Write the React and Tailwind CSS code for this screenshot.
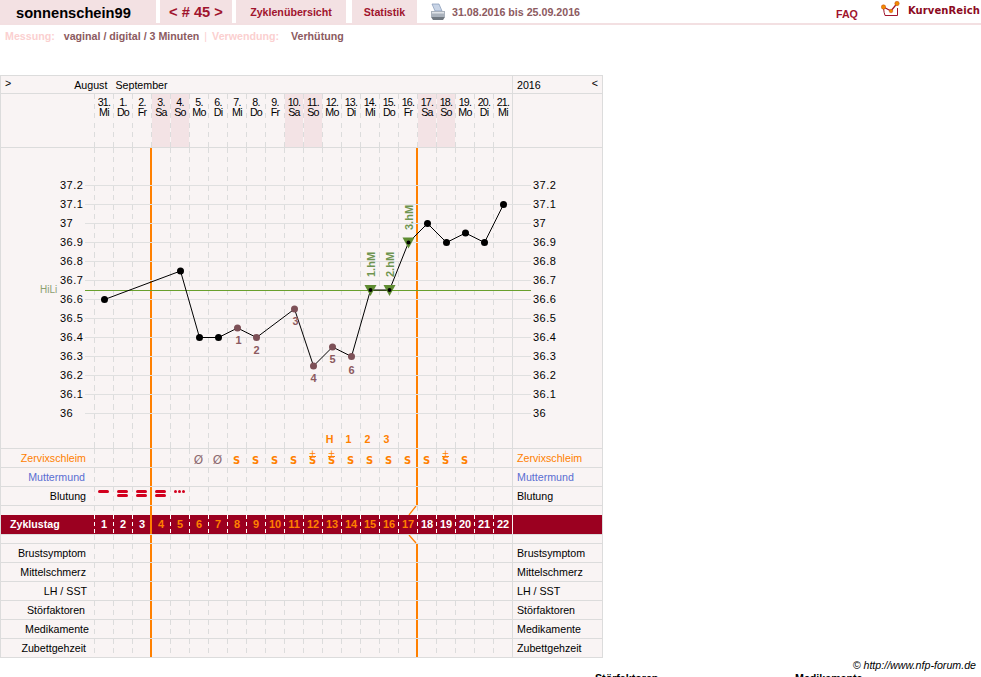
const days = [
  ["31.", "Mi"], ["1.", "Do"], ["2.", "Fr"], ["3.", "Sa"], ["4.", "So"], ["5.", "Mo"], ["6.", "Di"], ["7.", "Mi"],
  ["8.", "Do"], ["9.", "Fr"], ["10.", "Sa"], ["11.", "So"], ["12.", "Mo"], ["13.", "Di"], ["14.", "Mi"], ["15.", "Do"],
  ["16.", "Fr"], ["17.", "Sa"], ["18.", "So"], ["19.", "Mo"], ["20.", "Di"], ["21.", "Mi"],
];

const temps = ["37.2", "37.1", "37", "36.9", "36.8", "36.7", "36.6", "36.5", "36.4", "36.3", "36.2", "36.1", "36"];

// [day index, temperature, colour]
const points = [
  [0, 36.6, "b"], [4, 36.75, "b"], [5, 36.4, "b"], [6, 36.4, "b"], [7, 36.45, "r"], [8, 36.4, "r"], [10, 36.55, "r"],
  [11, 36.25, "r"], [12, 36.35, "r"], [13, 36.3, "r"], [14, 36.65, "s"], [15, 36.65, "s"], [16, 36.9, "s"],
  [17, 37, "b"], [18, 36.9, "b"], [19, 36.95, "b"], [20, 36.9, "b"], [21, 37.1, "b"],
];

const px = (i) => 19.5 + 19 * i;
const py = (t) => 265.5 - (t - 36) * 190;

const mucus = { 5: "Ø", 6: "Ø", 7: "S", 8: "S", 9: "S", 10: "S", 11: "S+", 12: "S+", 13: "S", 14: "S", 15: "S", 16: "S", 17: "S", 18: "S+", 19: "S" };
const peak = { 12: "H", 13: "1", 14: "2", 15: "3" };

const dash = "pl-[1px] bg-no-repeat bg-[length:1px_100%] bg-[repeating-linear-gradient(to_bottom,#dcdcdc_0,#dcdcdc_5px,transparent_5px,transparent_9.5px)]";
const dashWhite = "pl-[1px] bg-no-repeat bg-[length:1px_100%] bg-[repeating-linear-gradient(to_bottom,#ffffff_0,#ffffff_4px,transparent_4px,transparent_7px)]";

function DayCell({ index, noLine, children }) {
  const orange = index === 3 || (index === 17 && !noLine);
  return (
    <div className={`relative w-[19px] h-full shrink-0 ${dash}`}>
      {orange && <div className="absolute left-[-1px] top-0 bottom-0 w-[2px] bg-[#ff8000]" />}
      {children}
    </div>
  );
}

function Row({ label = "", labelClass = "text-black", pr = "pr-[8px]", height = "h-[19px]", border = "border-b", noLine, cell }) {
  return (
    <div className={`flex ${height} ${border} border-[#dcdcdc]`}>
      <div className={`w-[93px] shrink-0 text-right text-[10.67px] leading-[18px] ${pr} ${labelClass}`}>{label}</div>
      {days.map((d, i) => (
        <DayCell key={i} index={i} noLine={noLine}>
          {cell && cell(i)}
        </DayCell>
      ))}
      <div className={`flex-1 border-l border-[#dcdcdc] pl-[4px] text-[10.67px] leading-[18px] ${labelClass}`}>{label}</div>
    </div>
  );
}

function Bleed({ kind }) {
  if (kind === "dots") {
    return (
      <div className="flex justify-center gap-[1px] pt-[3px] pr-[1px]">
        <span className="w-[3px] h-[3px] rounded-full bg-[#d2001e]" />
        <span className="w-[3px] h-[3px] rounded-full bg-[#d2001e]" />
        <span className="w-[3px] h-[3px] rounded-full bg-[#d2001e]" />
      </div>
    );
  }
  return (
    <div className="flex flex-col items-center gap-[1px] pt-[3px] pr-[1px]">
      <span className="w-[11px] h-[3px] rounded-full bg-[#d2001e]" />
      {kind === "double" && <span className="w-[11px] h-[3px] rounded-full bg-[#d2001e]" />}
    </div>
  );
}

function Mucus({ value }) {
  if (value === "Ø") {
    return (
      <div className="pt-[5px] pr-[1px] text-center font-['DejaVu_Sans',sans-serif] text-[12px] leading-[12px] text-[#8c6a70]">Ø</div>
    );
  }
  return (
    <div className="flex flex-col items-center pt-[1px] pr-[1px] font-['DejaVu_Sans',sans-serif] text-[#ff8000]">
      <span className="h-[6px] text-[9px] leading-[6px]">{value === "S+" && "+"}</span>
      <span className={`h-[9px] text-[10px] font-bold leading-[8px] ${value === "S+" ? "border-t border-[#ff8000]" : "pt-[1px]"}`}>S</span>
    </div>
  );
}

function Chart() {
  const line = points.map((p) => `${px(p[0])},${py(p[1])}`).join(" ");
  return (
    <svg className="absolute left-[-9px] top-0 overflow-visible" width="446" height="300" viewBox="0 0 446 300">
      {temps.map((t) => (
        <line key={t} x1="0" x2="446" y1={py(Number(t))} y2={py(Number(t))} stroke="#e0e0e0" />
      ))}
      <line x1="0" x2="446" y1="142.5" y2="142.5" stroke="#69a02d" />
      <polyline points={line} fill="none" stroke="#000" />
      {points.map((p) =>
        p[2] === "s" ? (
          <g key={p[0]}>
            <polygon
              points={`${px(p[0]) - 6},${py(p[1]) - 5} ${px(p[0]) + 6},${py(p[1]) - 5} ${px(p[0])},${py(p[1]) + 6}`}
              fill="#5f8c32"
            />
            <circle cx={px(p[0])} cy={py(p[1])} r="2" fill="#000" />
          </g>
        ) : (
          <circle key={p[0]} cx={px(p[0])} cy={py(p[1])} r="3.5" fill={p[2] === "r" ? "#7d5057" : "#000"} />
        )
      )}
      {[
        [7, 36.45, "1", 16], [8, 36.4, "2", 16], [10, 36.55, "3", 16], [11, 36.25, "4", 16], [12, 36.35, "5", 16], [13, 36.3, "6", 17],
      ].map(([i, t, n, dy]) => (
        <text key={n} x={px(i) + (n === "3" || n === "1" ? 1 : 0)} y={py(t) + dy} textAnchor="middle" fontSize="11" fontWeight="700" fill="#8c5a60" fontFamily="Liberation Sans">
          {n}
        </text>
      ))}
      {[
        [14, "1.hM", 129], [15, "2.hM", 129], [16, "3.hM", 82],
      ].map(([i, s, y]) => (
        <text
          key={s}
          transform={`translate(${px(i) + 4} ${y}) rotate(-90)`}
          fontSize="11"
          fontWeight="700"
          fill="#6f9450"
          fontFamily="Liberation Sans"
        >
          {s}
        </text>
      ))}
    </svg>
  );
}

function App() {
  return (
    <div className="w-[981px] h-[677px] overflow-hidden bg-white font-['Liberation_Sans',Arial,sans-serif]">
      <div className="relative flex h-[25px] border-b-2 border-[#f3e0e2]">
        <div className="w-[156px] bg-[#f3e1e3] pl-[16px] text-[14.67px] font-bold leading-[26px] text-black">sonnenschein99</div>
        <div className="ml-[4px] w-[72px] bg-[#f3e1e3] text-center text-[14.67px] font-bold leading-[25px] text-[#a0142d]">
          &lt; # 45 &gt;
        </div>
        <div className="ml-[4px] w-[110px] bg-[#f3e1e3] text-center text-[10.67px] font-bold leading-[25px] text-[#a0142d]">
          Zyklenübersicht
        </div>
        <div className="ml-[6px] w-[65px] bg-[#f3e1e3] text-center text-[10.67px] font-bold leading-[25px] text-[#a0142d]">
          Statistik
        </div>
        <svg className="ml-[13px] mt-[3px]" width="16" height="18" viewBox="0 0 16 18">
          <path d="M2 1 L9 1 L12 8 L5 8 Z" fill="#c8d4e6" stroke="#8296b4" strokeWidth="0.7" />
          <path d="M1 8 L15 8 L15 14 L1 14 Z" fill="#aab2bc" />
          <path d="M1 14 L15 14 L13 17 L3 17 Z" fill="#707880" />
          <rect x="2" y="9" width="12" height="1.5" fill="#dfe3e8" />
        </svg>
        <div className="ml-[6px] text-[10.67px] font-bold leading-[25px] text-[#8c5a60]">31.08.2016 bis 25.09.2016</div>
        <div className="ml-auto mr-[23px] text-[10.67px] font-bold leading-[28px] text-[#a0142d]">FAQ</div>
        <svg className="mt-[1px] mr-[8px]" width="19" height="17" viewBox="0 0 19 17">
          <path d="M2.5 7 Q3 12 4 14.5 L16.5 14.5 L16.5 7" fill="none" stroke="#a0142d" strokeWidth="1" />
          <polyline points="2.5,6 10,10 16,2.5" fill="none" stroke="#a0142d" strokeWidth="1.3" />
          <circle cx="2.5" cy="6" r="2.2" fill="#f08c00" stroke="#c84614" strokeWidth="0.5" />
          <circle cx="10" cy="10" r="1.8" fill="#f08c00" stroke="#c84614" strokeWidth="0.5" />
          <circle cx="16" cy="2.5" r="2.2" fill="#f08c00" stroke="#c84614" strokeWidth="0.5" />
        </svg>
        <div className="mr-[1px] font-['DejaVu_Sans',sans-serif] text-[10px] font-bold leading-[21px] tracking-[0.1px] text-[#8c0a1e]">
          KurvenReich
        </div>
      </div>

      <div className="flex pl-[5px] pt-[4px] text-[10.67px] font-bold leading-[14px]">
        <span className="text-[#fbd0d0]">Messung:</span>
        <span className="ml-[9px] text-[#8c5a60]">vaginal / digital / 3 Minuten</span>
        <span className="ml-[5px] font-normal text-[#fbd0d0]">|</span>
        <span className="ml-[5px] text-[#fbd0d0]">Verwendung:</span>
        <span className="ml-[12px] text-[#8c5a60]">Verhütung</span>
      </div>

      <div className="mt-[32px] w-[603px] border-x border-t border-[#dcdcdc] bg-[#f9f4f4] text-black">
        <div className="flex h-[18px] border-b border-[#dcdcdc] text-[10.67px] leading-[18px]">
          <div className="flex w-[511px] shrink-0">
            <span className="pl-[4px] leading-[14px]">&gt;</span>
            <span className="ml-[63px]">August</span>
            <span className="ml-[8px]">September</span>
          </div>
          <div className="flex flex-1 justify-between border-l border-[#dcdcdc] px-[4px]">
            <span>2016</span>
            <span className="leading-[14px]">&lt;</span>
          </div>
        </div>

        <div className="flex h-[54px] border-b border-[#dcdcdc]">
          <div className="w-[93px] shrink-0" />
          {days.map((d, i) => (
            <DayCell key={i} index={99}>
              <div
                className={`h-full pt-[3px] text-center text-[10.67px] leading-[10px] tracking-[-0.7px] ${d[1] === "Sa" || d[1] === "So" ? "bg-[#f3e3e5]" : ""}`}
              >
                {d[0]}
                <br />
                {d[1]}
              </div>
            </DayCell>
          ))}
          <div className="flex-1 border-l border-[#dcdcdc]" />
        </div>

        <div className="relative flex h-[301px] border-b border-[#dcdcdc]">
          <div className="relative w-[93px] shrink-0">
            <span className="absolute left-[39px] top-[136px] text-[10px] leading-[12px] text-[#8ca070]">HiLi</span>
            {temps.map((t) => (
              <span key={t} className="absolute left-[59px] text-[11px] leading-[12px] tracking-[0.5px]" style={{ top: py(Number(t)) - 6.5 }}>
                {t}
              </span>
            ))}
          </div>
          {days.map((d, i) => (
            <DayCell key={i} index={i}>
              {peak[i] && (
                <span className="absolute inset-x-0 bottom-[3px] pr-[4px] text-center text-[10.67px] font-bold leading-[12px] text-[#ff8000]">
                  {peak[i]}
                </span>
              )}
            </DayCell>
          ))}
          <div className="relative flex-1 border-l border-[#dcdcdc]">
            {temps.map((t) => (
              <span key={t} className="absolute left-[20px] text-[11px] leading-[12px] tracking-[0.5px]" style={{ top: py(Number(t)) - 6.5 }}>
                {t}
              </span>
            ))}
          </div>
          <div className="absolute left-[93px] top-0">
            <Chart />
          </div>
        </div>

        <Row label="Zervixschleim" labelClass="text-[#ff8000]" cell={(i) => mucus[i] && <Mucus value={mucus[i]} />} />
        <Row label="Muttermund" pr="pr-[9px]" labelClass="text-[#5a6ed2]" />
        <Row
          label="Blutung"
          cell={(i) => {
            if (i === 0) return <Bleed kind="single" />;
            if (i >= 1 && i <= 3) return <Bleed kind="double" />;
            if (i === 4) return <Bleed kind="dots" />;
            return null;
          }}
        />
        <Row
          height="h-[9px]"
          border="border-b-0"
          noLine
          cell={(i) =>
            i === 17 && (
              <svg className="absolute left-[-9px] top-0" width="10" height="9" viewBox="0 0 10 9">
                <path d="M8 0 L1 9" stroke="#ff8000" strokeWidth="1.3" />
              </svg>
            )
          }
        />

        <div className="flex h-[20px] border-b border-[#dcdcdc] bg-[#9b0020] text-[11px] font-bold leading-[18px] text-white">
          <div className="w-[93px] shrink-0 pl-[9px] text-[10.67px]">Zyklustag</div>
          {days.map((d, i) => (
            <div key={i} className={`relative w-[19px] shrink-0 text-center ${dashWhite} ${i >= 3 && i <= 16 ? "text-[#ff8000]" : ""}`}>
              {i === 3 && <div className="absolute left-[-1px] top-0 bottom-0 w-[2px] bg-[#ff8000]" />}
              {i + 1}
            </div>
          ))}
          <div className="flex-1 border-l border-[#f9f4f4]" />
        </div>

        <Row
          height="h-[9px]"
          noLine
          cell={(i) =>
            i === 17 && (
              <svg className="absolute left-[-9px] top-0" width="10" height="9" viewBox="0 0 10 9">
                <path d="M1 0 L8 8" stroke="#ff8000" strokeWidth="1.3" />
              </svg>
            )
          }
        />
        <Row label="Brustsymptom" />
        <Row label="Mittelschmerz" />
        <Row label="LH / SST" pr="pr-[7px]" />
        <Row label="Störfaktoren" pr="pr-[9px]" />
        <Row label="Medikamente" pr="pr-[5px]" />
        <Row label="Zubettgehzeit" />
      </div>

      <div className="pr-[5px] pt-[1px] text-right text-[10.67px] italic leading-[13px] text-black">© http://www.nfp-forum.de</div>
      <div className="flex text-[10.67px] font-bold leading-[13px] text-black">
        <span className="ml-[595px] w-[200px]">Störfaktoren</span>
        <span>Medikamente</span>
      </div>
    </div>
  );
}

export default App;
